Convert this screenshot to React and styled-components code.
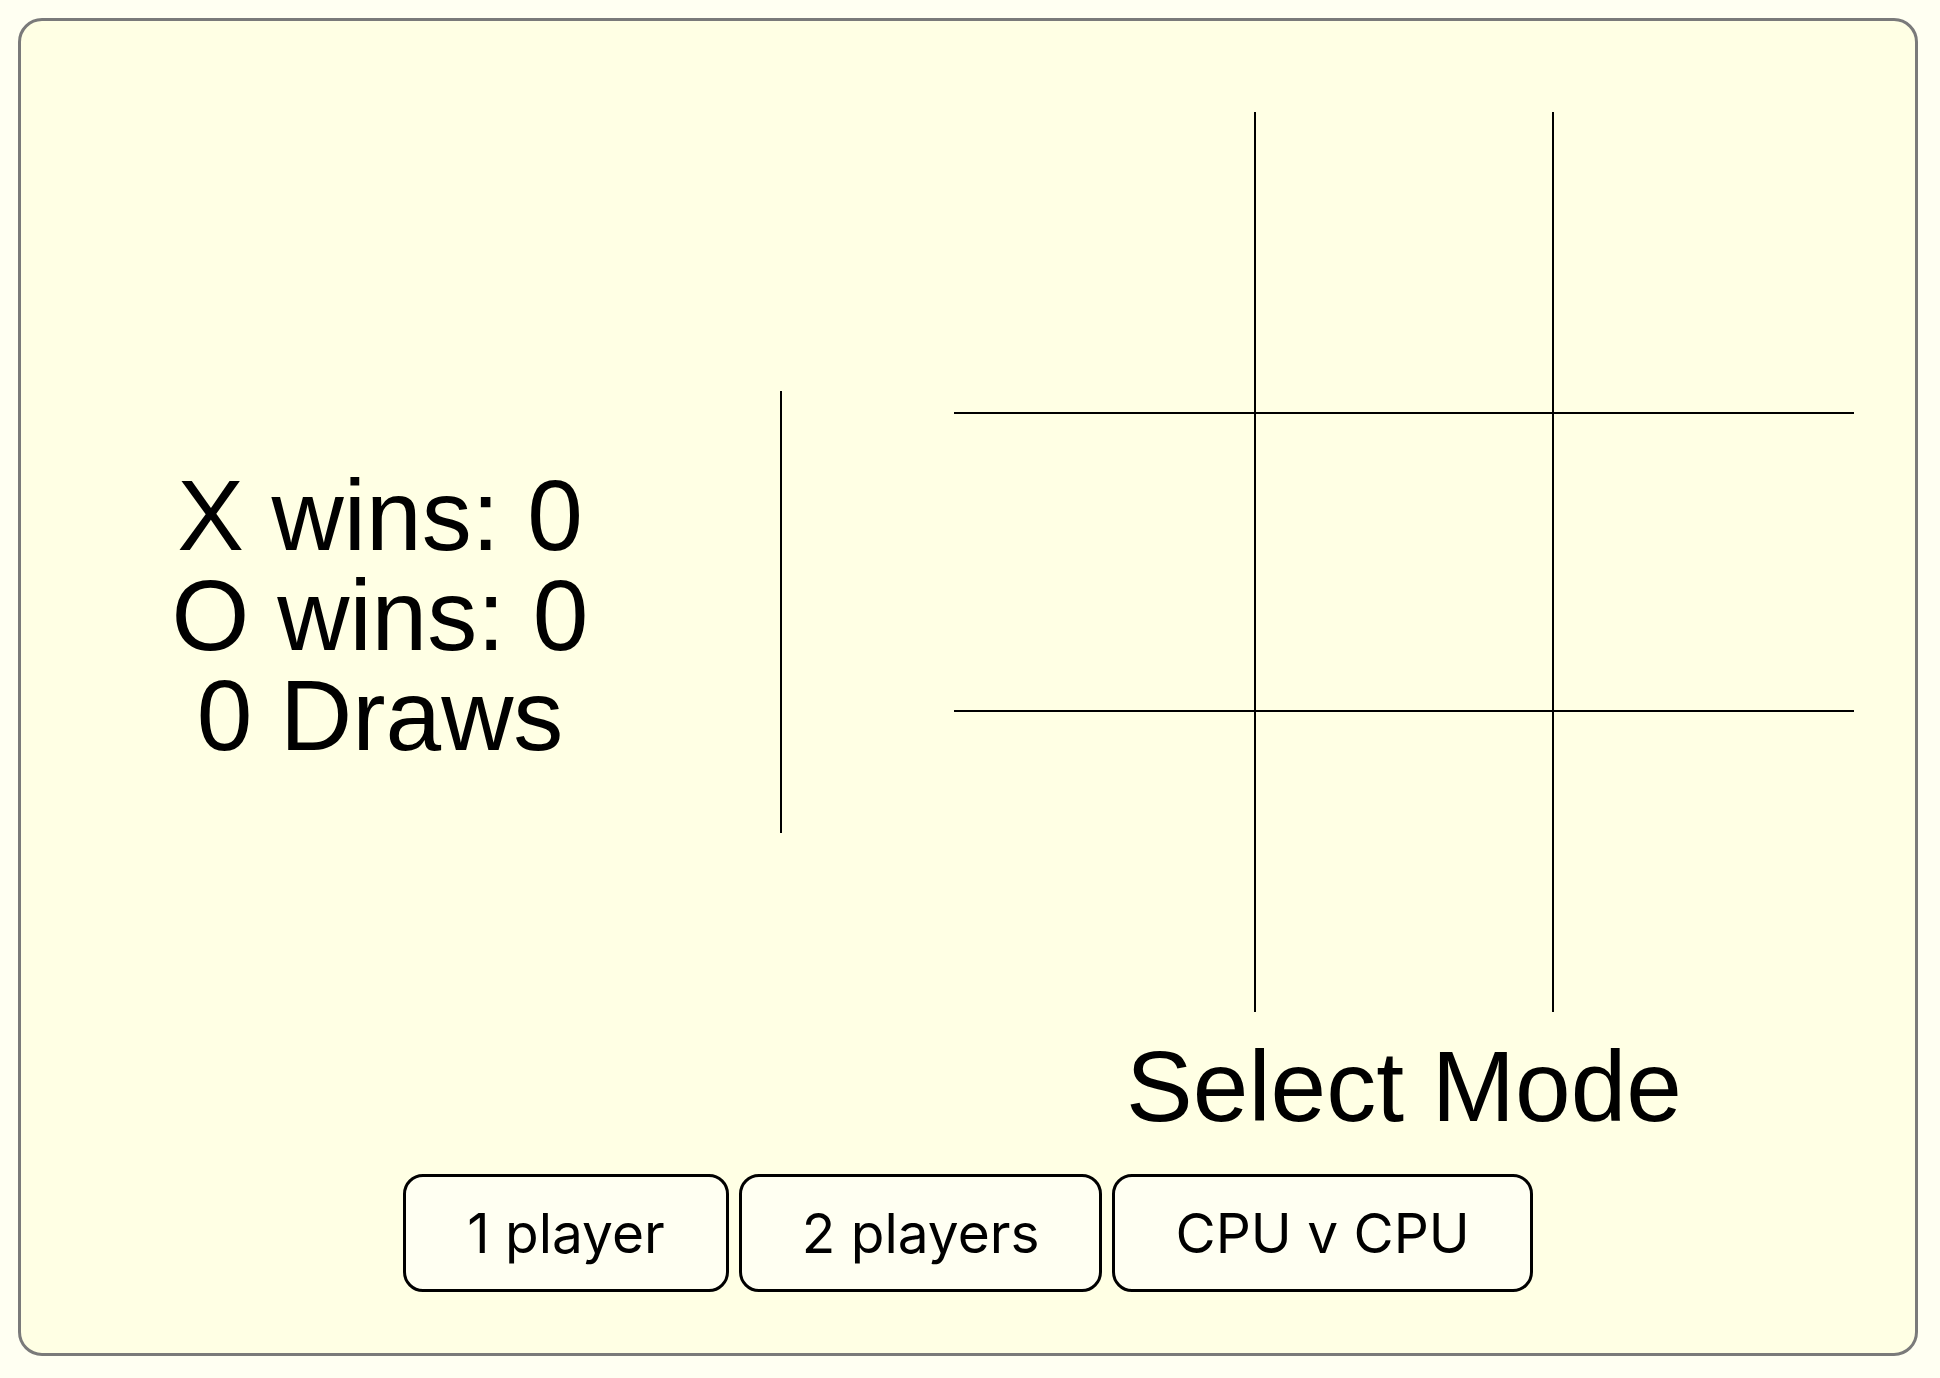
import styled, { createGlobalStyle } from 'styled-components';

const Global = createGlobalStyle`
  html, body {
    margin: 0;
    padding: 0;
    background: #fffff2;
  }
  body {
    font-family: "Liberation Sans", Arial, sans-serif;
    color: #000;
  }
`;

const Frame = styled.div`
  box-sizing: border-box;
  width: 1900px;
  height: 1338px;
  margin: 18px;
  padding: 91px 61px 0 0;
  background: #ffffe4;
  border: 3px solid #7a7a7a;
  border-radius: 24px;
  display: flex;
  flex-direction: column;
`;

const TopRow = styled.div`
  display: flex;
  align-items: flex-start;
`;

const LeftPanel = styled.div`
  display: flex;
  align-items: center;
  height: 1000px;
`;

const Score = styled.div`
  width: 718px;
  padding-top: 5px;
  font-size: 100px;
  line-height: 100px;
  text-align: center;
`;

const Divider = styled.div`
  width: 2px;
  height: 442px;
  margin-left: 41px;
  background: #000;
`;

const BoardColumn = styled.div`
  margin-left: 172px;
  width: 900px;
  display: flex;
  flex-direction: column;
`;

const Board = styled.div`
  display: grid;
  grid-template-columns: repeat(3, 300px);
  grid-template-rows: repeat(3, 300px);
`;

const Cell = styled.div`
  box-sizing: border-box;
  border-style: solid;
  border-color: #000;
  border-width: ${(p) => (p.$row === 1 ? '2px' : '0')} ${(p) => (p.$col === 1 ? '2px' : '0')}
    ${(p) => (p.$row === 1 ? '2px' : '0')} ${(p) => (p.$col === 1 ? '2px' : '0')};
`;

const Title = styled.div`
  margin-top: 24px;
  font-size: 100px;
  line-height: 100px;
  text-align: center;
`;

const ModeRow = styled.div`
  display: flex;
  justify-content: center;
  gap: 10px;
  margin-top: 38px;
  padding-left: 61px;
`;

const ModeButton = styled.button`
  box-sizing: border-box;
  height: 118px;
  padding: 0 ${(p) => p.$pad}px;
  font-family: Inter, "Liberation Sans", sans-serif;
  font-size: 55px;
  color: #000;
  background: #fffff2;
  border: 3px solid #000;
  border-radius: 20px;
  cursor: pointer;
`;

const modes = [
  { label: '1 player', pad: 61 },
  { label: '2 players', pad: 60 },
  { label: 'CPU v CPU', pad: 60 },
];

export default function App() {
  const cells = [];
  for (let r = 0; r < 3; r++) {
    for (let c = 0; c < 3; c++) {
      cells.push(<Cell key={`${r}-${c}`} $row={r} $col={c} />);
    }
  }

  return (
    <>
      <Global />
      <Frame>
        <TopRow>
          <LeftPanel>
            <Score>
              <div>X wins: 0</div>
              <div>O wins: 0</div>
              <div>0 Draws</div>
            </Score>
            <Divider />
          </LeftPanel>
          <BoardColumn>
            <Board>{cells}</Board>
            <Title>Select Mode</Title>
          </BoardColumn>
        </TopRow>
        <ModeRow>
          {modes.map((m) => (
            <ModeButton key={m.label} $pad={m.pad}>
              {m.label}
            </ModeButton>
          ))}
        </ModeRow>
      </Frame>
    </>
  );
}
